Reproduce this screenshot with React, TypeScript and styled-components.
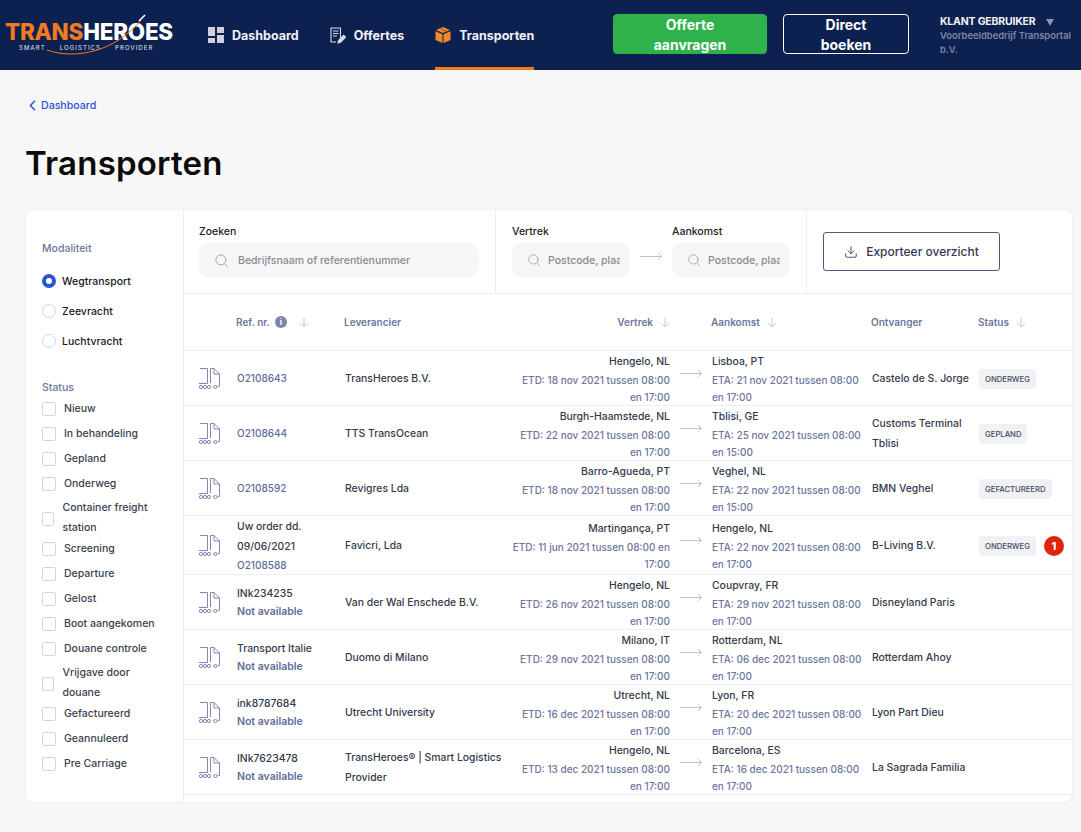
import React from "react"
import styled, { createGlobalStyle } from "styled-components"
import { Download, Search } from "lucide-react"

const GlobalStyle = createGlobalStyle`
  html, body { margin: 0; padding: 0; background: #f7f7f7; }
  body { font-family: "Inter", "Open Sans", sans-serif; color: #111; }
  * { box-sizing: border-box; }
`

const Header = styled.header`
  display: flex;
  align-items: stretch;
  height: 70px;
  background: #0d2150;
  padding-left: 5px;
`
const Logo = styled.div`
  position: relative;
  width: 203px;
  padding-top: 20px;
`
const LogoWord = styled.div`
  font-size: 22.4px;
  line-height: 24px;
  font-weight: 800;
  letter-spacing: -0.2px;
  color: #fff;
  span { color: #f07a22; }
`
const LogoSub = styled.div`
  display: flex;
  gap: 14px;
  padding-left: 14px;
  font-size: 6px;
  line-height: 7px;
  letter-spacing: 1.1px;
  color: #e8e9f0;
`
const LogoSwoosh = styled.svg`
  position: absolute;
  left: 40px;
  top: 12px;
`
const Nav = styled.nav`
  display: flex;
  gap: 31px;
`
const NavItem = styled.a<{ $active?: boolean }>`
  display: flex;
  align-items: center;
  gap: 8px;
  font-size: 12.5px;
  font-weight: 700;
  color: #f1f2f7;
  border-bottom: 3px solid ${p => (p.$active ? "#f07a22" : "transparent")};
  padding-top: 3px;
`
const Actions = styled.div`
  display: flex;
  align-items: center;
  margin-left: auto;
  gap: 16px;
  padding-bottom: 2px;
`
const HeadButton = styled.button<{ $green?: boolean }>`
  height: 40px;
  width: ${p => (p.$green ? "154px" : "126px")};
  padding: 0 30px 6px;
  border-radius: 4px;
  border: 1px solid ${p => (p.$green ? "#2fb24c" : "#fff")};
  background: ${p => (p.$green ? "#2fb24c" : "transparent")};
  color: #fff;
  font-family: inherit;
  font-size: 14px;
  line-height: 20px;
  font-weight: 700;
`
const User = styled.div`
  width: 141px;
  margin-left: 31px;
  padding: 15px 2px 0 0;
`
const UserName = styled.div`
  display: flex;
  align-items: center;
  gap: 11px;
  font-size: 10.5px;
  line-height: 14px;
  font-weight: 700;
  letter-spacing: -0.2px;
  color: #f1f2f7;
  &::after {
    content: "";
    border-left: 4px solid transparent;
    border-right: 4px solid transparent;
    border-top: 7px solid #8d94b3;
  }
`
const UserCompany = styled.div`
  font-size: 9.4px;
  line-height: 14px;
  font-weight: 600;
  color: #7d86aa;
`

const Page = styled.main`
  padding: 0 8px 30px 25px;
`
const Crumb = styled.a`
  display: flex;
  align-items: center;
  gap: 5px;
  padding: 27px 0 0 4px;
  height: 43px;
  font-size: 10.6px;
  font-weight: 500;
  color: #2a55d6;
`
const Title = styled.h1`
  margin: 27px 0 23px;
  font-size: 33px;
  line-height: 46px;
  font-weight: 600;
  letter-spacing: 0.2px;
  color: #0b0b0b;
`
const Card = styled.section`
  display: flex;
  height: 594px;
  background: #fff;
  border: 1px solid #eeeeee;
  border-radius: 8px;
  overflow: hidden;
`
const Sidebar = styled.aside`
  width: 158px;
  flex-shrink: 0;
  padding: 30px 0 0 16px;
  border-right: 1px solid #eceef2;
`
const SideTitle = styled.div<{ $gap: number }>`
  font-size: 10.5px;
  line-height: 18px;
  font-weight: 500;
  color: #6c769e;
  margin-bottom: ${p => p.$gap}px;
`
const RadioGroup = styled.div`
  margin-bottom: 23px;
`
const RadioRow = styled.label`
  display: flex;
  align-items: center;
  gap: 6px;
  height: 30px;
  font-size: 10.5px;
  font-weight: 500;
  color: #1a1a1a;
`
const RadioDot = styled.span<{ $on?: boolean }>`
  width: 14px;
  height: 14px;
  border-radius: 50%;
  background: #fff;
  border: ${p => (p.$on ? "4px solid #2a55d6" : "1px solid #d3d5e4")};
`
const CheckRow = styled.label<{ $wrapped?: boolean }>`
  display: flex;
  align-items: ${p => (p.$wrapped ? "center" : "flex-start")};
  gap: ${p => (p.$wrapped ? "8.5px" : "8px")};
  min-height: 25px;
  font-size: 10.5px;
  line-height: 20px;
  font-weight: 500;
  color: #3a3f4f;
`
const CheckBox = styled.span<{ $wrapped?: boolean }>`
  flex-shrink: 0;
  width: ${p => (p.$wrapped ? "12px" : "14px")};
  height: 14px;
  margin-top: ${p => (p.$wrapped ? "0" : "3px")};
  border: 1px solid #d3d5e4;
  border-radius: 2px;
  background: #fff;
`
const CheckText = styled.span<{ $wrapped?: boolean }>`
  max-width: 92px;
  transform: translateY(${p => (p.$wrapped ? "-1px" : "0")});
`

const Content = styled.div`
  flex: 1;
  min-width: 0;
`
const Toolbar = styled.div`
  display: flex;
  height: 84px;
  border-bottom: 1px solid #eceef2;
`
const ToolSection = styled.div<{ $width?: number }>`
  width: ${p => (p.$width ? p.$width + "px" : "auto")};
  flex: ${p => (p.$width ? "none" : "1")};
  padding: 14px 16px 0 ${p => (p.$width ? "15px" : "16px")};
  border-right: ${p => (p.$width ? "1px solid #eceef2" : "0")};
`
const RouteFields = styled.div`
  display: flex;
  align-items: flex-start;
  gap: 10px;
  padding-left: 1px;
`
const FieldLabel = styled.div`
  font-size: 10.5px;
  line-height: 16px;
  font-weight: 500;
  color: #222;
  margin-bottom: 2px;
`
const Field = styled.div<{ $width: number }>`
  display: flex;
  align-items: center;
  gap: ${p => (p.$width > 200 ? "9px" : "7px")};
  width: ${p => p.$width}px;
  height: 36px;
  padding: 0 10px 0 15px;
  border-radius: 12px;
  background: #f6f6f7;
  color: #9ba3c0;
  overflow: hidden;
`
const FieldHint = styled.span`
  flex: 1;
  min-width: 0;
  overflow: hidden;
  white-space: nowrap;
  font-size: 10.5px;
  font-weight: 500;
  color: #888a92;
`
const RouteArrowBox = styled.div`
  padding-top: 28px;
  line-height: 0;
`
const ExportButton = styled.button`
  display: flex;
  align-items: center;
  justify-content: center;
  gap: 8px;
  margin-top: 8px;
  width: 177px;
  height: 39px;
  background: #fff;
  border: 1px solid #4d5a85;
  border-radius: 3px;
  font-family: inherit;
  font-size: 12px;
  font-weight: 500;
  color: #333a4d;
`

const columns = "38px 108px 160px 165px 42px 160px 107px 1fr"
const HeadRow = styled.div`
  display: grid;
  grid-template-columns: ${columns};
  align-items: center;
  height: 57px;
  padding-left: 15px;
  border-bottom: 1px solid #eceef2;
  font-size: 10px;
  font-weight: 600;
  color: #6c769e;
`
const HeadCell = styled.div<{ $col: number; $right?: boolean }>`
  grid-column: ${p => p.$col};
  display: flex;
  align-items: center;
  justify-content: ${p => (p.$right ? "flex-end" : "flex-start")};
  gap: 7px;
  margin-left: -1px;
`
const InfoDot = styled.span`
  display: inline-flex;
  align-items: center;
  justify-content: center;
  width: 12px;
  height: 12px;
  margin: 0 5px 0 -2px;
  border-radius: 50%;
  background: #7d86aa;
  color: #fff;
  font-size: 8px;
  font-weight: 700;
`
const Row = styled.div<{ $tall?: boolean }>`
  display: grid;
  grid-template-columns: ${columns};
  align-items: center;
  height: ${p => (p.$tall ? "59px" : "55px")};
  padding: 1px 0 0 15px;
  border-bottom: 1px solid #eceef2;
  font-size: 10.4px;
  font-weight: 500;
  color: #333a4d;
`
const RefCell = styled.div`
  padding-bottom: 2px;
`
const RefName = styled.div`
  line-height: 20px;
  padding-right: 14px;
`
const RefCode = styled.div<{ $missing?: boolean }>`
  line-height: 16px;
  font-size: ${p => (p.$missing ? "10.5px" : "10px")};
  font-weight: ${p => (p.$missing ? 600 : 500)};
  color: #5f6c9b;
`
const Supplier = styled.div`
  line-height: 20px;
`
const Place = styled.div<{ $right?: boolean }>`
  text-align: ${p => (p.$right ? "right" : "left")};
  padding: ${p => (p.$right ? "1px 0 0 4px" : "1px 8px 0 0")};
  line-height: 17px;
`
const City = styled.div`
  margin-bottom: 2px;
`
const Dates = styled.div`
  font-size: 10px;
  color: #6c769e;
`
const ArrowCell = styled.div`
  display: flex;
  padding: 0 0 12px 10px;
`
const StatusCell = styled.div`
  display: flex;
  align-items: center;
  gap: 8px;
`
const Badge = styled.span`
  height: 20px;
  padding: 0 6px;
  display: inline-flex;
  align-items: center;
  border-radius: 4px;
  background: #f0f1f5;
  font-size: 7.7px;
  font-weight: 500;
  color: #444a5c;
`
const Alert = styled.span`
  width: 20px;
  height: 20px;
  display: inline-flex;
  align-items: center;
  justify-content: center;
  border-radius: 50%;
  background: #e0230b;
  color: #fff;
  font-size: 11px;
  font-weight: 800;
`

function BackChevron() {
  return (
    <svg width="7" height="11" viewBox="0 0 7 11" fill="none" stroke="#2a55d6" strokeWidth="1.5">
      <path d="M6 .8L1.4 5.5 6 10.2" />
    </svg>
  )
}

function SortArrow() {
  return (
    <svg width="10" height="11" viewBox="0 0 10 11" fill="none" stroke="#c6cadd" strokeWidth="1">
      <path d="M5 0.5V10M1 6l4 4 4-4" />
    </svg>
  )
}

function LongArrow() {
  return (
    <svg width="22" height="9" viewBox="0 0 22 9" fill="none" stroke="#bcc0d9" strokeWidth="1">
      <path d="M0 4.5h21.5M18 1l3.5 3.5L18 8" />
    </svg>
  )
}

function TruckIcon() {
  return (
    <svg width="22" height="22" viewBox="0 0 22 22" fill="none" stroke="#8089ae" strokeWidth="1">
      <path d="M1 .5h7.5v15H0" />
      <path d="M11.5 15V.5h3.5l5.5 5.5v12.5h-1.5" />
      <path d="M15 .5V6h5.5M14 18.5h.5" />
      <circle cx="2" cy="19" r="1.6" />
      <circle cx="6" cy="19" r="1.6" />
      <circle cx="10" cy="19" r="1.6" />
      <circle cx="16.5" cy="19" r="1.6" />
    </svg>
  )
}

function DashboardIcon() {
  return (
    <svg width="16" height="16" viewBox="0 0 16 16" fill="#cfd2de">
      <rect x="0" y="0" width="7" height="9" />
      <rect x="9" y="0" width="7" height="6" />
      <rect x="0" y="11" width="7" height="5" />
      <rect x="9" y="8" width="7" height="8" />
    </svg>
  )
}

function OfferIcon() {
  return (
    <svg width="16" height="17" viewBox="0 0 16 17" fill="none" stroke="#d9dbe6" strokeWidth="1.1">
      <path d="M10.5 11V1H1v14h5" />
      <path d="M3 4h5.5M3 6.5h5.5M3 9h4" />
      <path d="M8 16l.6-2.8 5-5 2 2-5 5z" fill="#d9dbe6" />
    </svg>
  )
}

function BoxIcon() {
  return (
    <svg width="16" height="16" viewBox="0 0 16 16" fill="#f08a2c">
      <path d="M8 0l7 3-7 3-7-3z" />
      <path d="M.5 4.2l7 3V16l-7-3z" />
      <path d="M15.5 4.2l-7 3V16l7-3z" />
      <path d="M4 1.6l7 3.1 1.4-.6-7-3.1z" fill="#a9571a" />
    </svg>
  )
}

type Transport = {
  name?: string
  code: string
  supplier: string
  from: string
  etd: string
  to: string
  eta: string
  receiver: string
  status?: string
  alert?: number
  tall?: boolean
}

const transports: Transport[] = [
  { code: "O2108643", supplier: "TransHeroes B.V.", from: "Hengelo, NL", etd: "ETD: 18 nov 2021 tussen 08:00 en 17:00", to: "Lisboa, PT", eta: "ETA: 21 nov 2021 tussen 08:00 en 17:00", receiver: "Castelo de S. Jorge", status: "ONDERWEG" },
  { code: "O2108644", supplier: "TTS TransOcean", from: "Burgh-Haamstede, NL", etd: "ETD: 22 nov 2021 tussen 08:00 en 17:00", to: "Tblisi, GE", eta: "ETA: 25 nov 2021 tussen 08:00 en 15:00", receiver: "Customs Terminal Tblisi", status: "GEPLAND" },
  { code: "O2108592", supplier: "Revigres Lda", from: "Barro-Agueda, PT", etd: "ETD: 18 nov 2021 tussen 08:00 en 17:00", to: "Veghel, NL", eta: "ETA: 22 nov 2021 tussen 08:00 en 15:00", receiver: "BMN Veghel", status: "GEFACTUREERD" },
  { name: "Uw order dd. 09/06/2021", code: "O2108588", supplier: "Favicri, Lda", from: "Martingança, PT", etd: "ETD: 11 jun 2021 tussen 08:00 en 17:00", to: "Hengelo, NL", eta: "ETA: 22 nov 2021 tussen 08:00 en 17:00", receiver: "B-Living B.V.", status: "ONDERWEG", alert: 1, tall: true },
  { name: "INk234235", code: "Not available", supplier: "Van der Wal Enschede B.V.", from: "Hengelo, NL", etd: "ETD: 26 nov 2021 tussen 08:00 en 17:00", to: "Coupvray, FR", eta: "ETA: 29 nov 2021 tussen 08:00 en 17:00", receiver: "Disneyland Paris" },
  { name: "Transport Italie", code: "Not available", supplier: "Duomo di Milano", from: "Milano, IT", etd: "ETD: 29 nov 2021 tussen 08:00 en 17:00", to: "Rotterdam, NL", eta: "ETA: 06 dec 2021 tussen 08:00 en 17:00", receiver: "Rotterdam Ahoy" },
  { name: "ink8787684", code: "Not available", supplier: "Utrecht University", from: "Utrecht, NL", etd: "ETD: 16 dec 2021 tussen 08:00 en 17:00", to: "Lyon, FR", eta: "ETA: 20 dec 2021 tussen 08:00 en 17:00", receiver: "Lyon Part Dieu" },
  { name: "INk7623478", code: "Not available", supplier: "TransHeroes® | Smart Logistics Provider", from: "Hengelo, NL", etd: "ETD: 13 dec 2021 tussen 08:00 en 17:00", to: "Barcelona, ES", eta: "ETA: 16 dec 2021 tussen 08:00 en 17:00", receiver: "La Sagrada Familia" },
]

const statuses = ["Nieuw", "In behandeling", "Gepland", "Onderweg", "Container freight station", "Screening", "Departure", "Gelost", "Boot aangekomen", "Douane controle", "Vrijgave door douane", "Gefactureerd", "Geannuleerd", "Pre Carriage"]
const wrappedStatuses = ["Container freight station", "Vrijgave door douane"]

export default function App() {
  return (
    <>
      <GlobalStyle />
      <Header>
        <Logo>
          <LogoWord><span>TRANS</span>HEROES</LogoWord>
          <LogoSub><span>SMART</span><span>LOGISTICS</span><span>PROVIDER</span></LogoSub>
          <LogoSwoosh width="110" height="46" viewBox="0 0 110 46" fill="none">
            <path d="M2 38C30 48 70 40 96 8" stroke="#f07a22" strokeWidth="1" />
            <path d="M94 9l6-6" stroke="#fff" strokeWidth="1.6" />
          </LogoSwoosh>
        </Logo>
        <Nav>
          <NavItem><DashboardIcon />Dashboard</NavItem>
          <NavItem><OfferIcon />Offertes</NavItem>
          <NavItem $active><BoxIcon />Transporten</NavItem>
        </Nav>
        <Actions>
          <HeadButton $green>Offerte aanvragen</HeadButton>
          <HeadButton>Direct boeken</HeadButton>
        </Actions>
        <User>
          <UserName>KLANT GEBRUIKER</UserName>
          <UserCompany>Voorbeeldbedrijf Transportal b.V.</UserCompany>
        </User>
      </Header>
      <Page>
        <Crumb><BackChevron />Dashboard</Crumb>
        <Title>Transporten</Title>
        <Card>
          <Sidebar>
            <SideTitle $gap={8}>Modaliteit</SideTitle>
            <RadioGroup>
              <RadioRow><RadioDot $on />Wegtransport</RadioRow>
              <RadioRow><RadioDot />Zeevracht</RadioRow>
              <RadioRow><RadioDot />Luchtvracht</RadioRow>
            </RadioGroup>
            <SideTitle $gap={2}>Status</SideTitle>
            {statuses.map(s => {
              const wrapped = wrappedStatuses.includes(s)
              return (
                <CheckRow key={s} $wrapped={wrapped}>
                  <CheckBox $wrapped={wrapped} />
                  <CheckText $wrapped={wrapped}>{s}</CheckText>
                </CheckRow>
              )
            })}
          </Sidebar>
          <Content>
            <Toolbar>
              <ToolSection $width={312}>
                <FieldLabel>Zoeken</FieldLabel>
                <Field $width={280}>
                  <Search size={15} strokeWidth={1.5} />
                  <FieldHint>Bedrijfsnaam of referentienummer</FieldHint>
                </Field>
              </ToolSection>
              <ToolSection $width={311}>
                <RouteFields>
                  <div>
                    <FieldLabel>Vertrek</FieldLabel>
                    <Field $width={118}>
                      <Search size={14} strokeWidth={1.5} />
                      <FieldHint>Postcode, plaats</FieldHint>
                    </Field>
                  </div>
                  <RouteArrowBox><LongArrow /></RouteArrowBox>
                  <div>
                    <FieldLabel>Aankomst</FieldLabel>
                    <Field $width={118}>
                      <Search size={14} strokeWidth={1.5} />
                      <FieldHint>Postcode, plaats</FieldHint>
                    </Field>
                  </div>
                </RouteFields>
              </ToolSection>
              <ToolSection>
                <ExportButton><Download size={14} strokeWidth={1.5} />Exporteer overzicht</ExportButton>
              </ToolSection>
            </Toolbar>
            <HeadRow>
              <HeadCell $col={2}>Ref. nr.<InfoDot>i</InfoDot><SortArrow /></HeadCell>
              <HeadCell $col={3}>Leverancier</HeadCell>
              <HeadCell $col={4} $right>Vertrek<SortArrow /></HeadCell>
              <HeadCell $col={6}>Aankomst<SortArrow /></HeadCell>
              <HeadCell $col={7}>Ontvanger</HeadCell>
              <HeadCell $col={8}>Status<SortArrow /></HeadCell>
            </HeadRow>
            {transports.map(t => (
              <Row key={t.code + t.supplier} $tall={t.tall}>
                <TruckIcon />
                <RefCell>
                  {t.name && <RefName>{t.name}</RefName>}
                  <RefCode $missing={t.code === "Not available"}>{t.code}</RefCode>
                </RefCell>
                <Supplier>{t.supplier}</Supplier>
                <Place $right>
                  <City>{t.from}</City>
                  <Dates>{t.etd}</Dates>
                </Place>
                <ArrowCell><LongArrow /></ArrowCell>
                <Place>
                  <City>{t.to}</City>
                  <Dates>{t.eta}</Dates>
                </Place>
                <Supplier>{t.receiver}</Supplier>
                <StatusCell>
                  {t.status && <Badge>{t.status}</Badge>}
                  {t.alert && <Alert>{t.alert}</Alert>}
                </StatusCell>
              </Row>
            ))}
          </Content>
        </Card>
      </Page>
    </>
  )
}
